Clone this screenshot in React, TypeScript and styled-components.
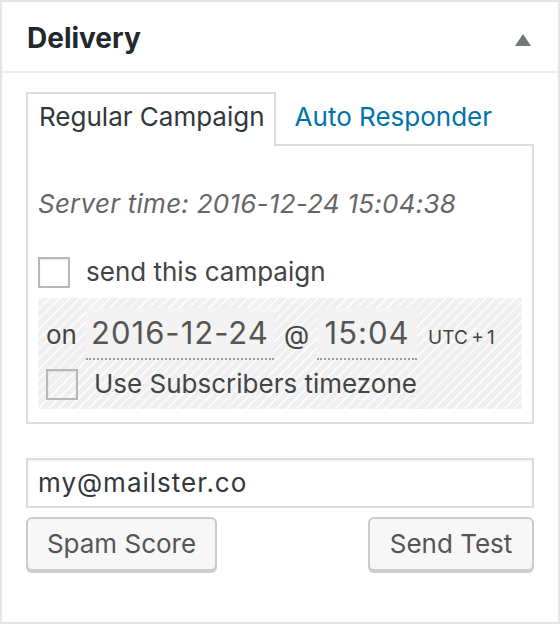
import React from "react";
import styled, { createGlobalStyle } from "styled-components";

const Global = createGlobalStyle`
  html, body { margin: 0; padding: 0; background: #fff; }
  body { font-family: Inter, "Noto Sans", "Liberation Sans", sans-serif; }
  * { box-sizing: border-box; }
`;

const Box = styled.div`
  width: 560px;
  height: 624px;
  border: 2px solid #e5e5e5;
  background: #fff;
  color: #444;
`;

const Header = styled.div`
  display: flex;
  align-items: flex-start;
  justify-content: space-between;
  height: 71px;
  padding: 18px 27px 0 25px;
  border-bottom: 2px solid #eee;
`;

const Title = styled.h2`
  margin: 0;
  font-size: 28px;
  line-height: 36px;
  font-weight: 700;
  color: #23282d;
`;

const Toggle = styled.svg`
  margin-top: 14px;
  width: 16px;
  height: 12px;
`;

const Inside = styled.div`
  padding: 19px 24px 0 24px;
`;

const Tabs = styled.div`
  display: flex;
  margin-bottom: -2px;
  position: relative;
  z-index: 1;
`;

const Tab = styled.div<{ $active?: boolean }>`
  height: 54px;
  padding: 5px ${(p) => (p.$active ? "9px" : "11px")} 0 11px;
  margin-left: ${(p) => (p.$active ? "0" : "6px")};
  font-size: 26px;
  line-height: 36px;
  color: ${(p) => (p.$active ? "#32373c" : "#0073aa")};
  background: ${(p) => (p.$active ? "#fff" : "transparent")};
  border: 2px solid ${(p) => (p.$active ? "#ddd" : "transparent")};
  border-bottom: none;
  white-space: nowrap;
`;

const Panel = styled.div`
  border: 2px solid #ddd;
  background: #fff;
  padding: 40px 10px 13px 10px;
`;

const ServerTime = styled.div`
  font-size: 26px;
  line-height: 36px;
  font-style: italic;
  letter-spacing: 0.25px;
  color: #666;
`;

const CheckRow = styled.label<{ $top: number; $left: number }>`
  display: flex;
  align-items: center;
  height: 32px;
  margin-top: ${(p) => p.$top}px;
  padding-left: ${(p) => p.$left}px;
  font-size: 26px;
  line-height: 36px;
  color: #444;
  gap: 16px;
`;

const Check = styled.span<{ $clear?: boolean }>`
  display: inline-block;
  width: 32px;
  height: 31px;
  border: 2px solid #b4b9be;
  background: ${(p) => (p.$clear ? "transparent" : "#fff")};
  box-shadow: inset 0 1px 2px rgba(0, 0, 0, 0.1);
`;

const Striped = styled.div`
  margin-top: 10px;
  height: 111px;
  padding: 10px 0 0 0;
  background: repeating-linear-gradient(
    -45deg,
    #f0f0f0 0 5px,
    #fbfbfb 5px 7px
  );
`;

const DateRow = styled.div`
  display: flex;
  align-items: baseline;
  padding-left: 8px;
  font-size: 26px;
  color: #444;
`;

const Word = styled.span<{ $gap: number }>`
  margin-right: ${(p) => p.$gap}px;
`;

const Field = styled.span<{ $w: number }>`
  display: inline-block;
  width: ${(p) => p.$w}px;
  height: 52px;
  font-size: 31px;
  line-height: 50px;
  letter-spacing: 1px;
  text-align: center;
  color: #555;
  background: #f3f3f3;
  border-bottom: 2px dotted #999;
  margin-right: 10px;
`;

const Zone = styled.span`
  font-size: 19px;
  word-spacing: -2px;
  color: #444;
  margin-left: 1px;
`;

const Email = styled.div`
  margin-top: 34px;
  height: 50px;
  border: 2px solid #ddd;
  box-shadow: inset 0 1px 2px rgba(0, 0, 0, 0.07);
  padding: 0 10px;
  font-size: 26px;
  line-height: 46px;
  letter-spacing: 1px;
  color: #32373c;
`;

const Buttons = styled.div`
  display: flex;
  justify-content: space-between;
  margin-top: 9px;
`;

const Button = styled.button<{ $w: number }>`
  width: ${(p) => p.$w}px;
  height: 54px;
  padding: 0;
  border: 2px solid #ccc;
  border-radius: 6px;
  background: #f7f7f7;
  box-shadow: 0 2px 0 #ccc;
  font-family: inherit;
  font-size: 26px;
  line-height: 50px;
  color: #555;
`;

export default function App() {
  return (
    <>
      <Global />
      <Box>
        <Header>
          <Title>Delivery</Title>
          <Toggle viewBox="0 0 16 12">
            <polygon points="8,0 16,12 0,12" fill="#72777c" />
          </Toggle>
        </Header>
        <Inside>
          <Tabs>
            <Tab $active>Regular Campaign</Tab>
            <Tab>Auto Responder</Tab>
          </Tabs>
          <Panel>
            <ServerTime>Server time: 2016-12-24 15:04:38</ServerTime>
            <CheckRow $top={34} $left={0}>
              <Check />
              send this campaign
            </CheckRow>
            <Striped>
              <DateRow>
                <Word $gap={9}>on</Word>
                <Field $w={188}>2016-12-24</Field>
                <Word $gap={8}>@</Word>
                <Field $w={100}>15:04</Field>
                <Zone>UTC + 1</Zone>
              </DateRow>
              <CheckRow $top={8} $left={8}>
                <Check $clear />
                Use Subscribers timezone
              </CheckRow>
            </Striped>
          </Panel>
          <Email>my@mailster.co</Email>
          <Buttons>
            <Button $w={191}>Spam Score</Button>
            <Button $w={166}>Send Test</Button>
          </Buttons>
        </Inside>
      </Box>
    </>
  );
}
